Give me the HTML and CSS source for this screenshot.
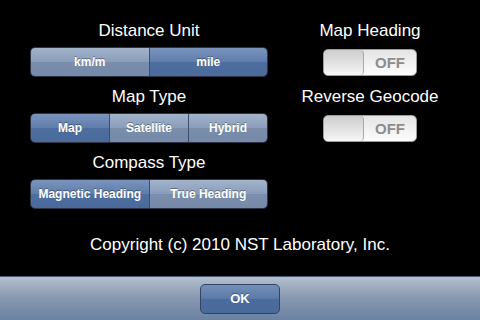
FILE: index.html
```html
<!DOCTYPE html>
<html>
<head>
  <meta charset="utf-8">
  <link rel="stylesheet" href="styles.css">
</head>
<body>
  <div class="main">
    <div class="columns">
      <div class="left">
        <div class="group">
          <div class="title">Distance Unit</div>
          <div class="segmented">
            <div class="seg">km/m</div>
            <div class="seg selected">mile</div>
          </div>
        </div>
        <div class="group">
          <div class="title">Map Type</div>
          <div class="segmented">
            <div class="seg selected">Map</div>
            <div class="seg">Satellite</div>
            <div class="seg">Hybrid</div>
          </div>
        </div>
        <div class="group">
          <div class="title">Compass Type</div>
          <div class="segmented">
            <div class="seg selected">Magnetic Heading</div>
            <div class="seg">True Heading</div>
          </div>
        </div>
      </div>

      <div class="right">
        <div class="switch-group">
          <div class="title">Map Heading</div>
          <div class="switch">
            <span class="thumb"></span>
            <span class="state">OFF</span>
          </div>
        </div>
        <div class="switch-group">
          <div class="title">Reverse Geocode</div>
          <div class="switch">
            <span class="thumb"></span>
            <span class="state">OFF</span>
          </div>
        </div>
      </div>
    </div>

    <div class="copyright">Copyright (c) 2010 NST Laboratory, Inc.</div>
  </div>

  <div class="toolbar">
    <button class="ok-btn">OK</button>
  </div>
</body>
</html>
```

FILE: styles.css
```css
body {
  width: 480px;
  height: 320px;
  margin: 0;
  padding: 0;
  background: #000;
  color: #fff;
  font-family: "Liberation Sans", Arial, sans-serif;
  display: flex;
  flex-direction: column;
  overflow: hidden;
}

.main {
  flex: 1;
  padding-top: 21px;
}

.columns {
  display: flex;
}

.left {
  width: 238px;
  margin-left: 30px;
}

.right {
  width: 140px;
  margin-left: 32px;
  display: flex;
  flex-direction: column;
  align-items: center;
}

.title {
  font-size: 17px;
  line-height: 20px;
  text-align: center;
  white-space: nowrap;
}

.group {
  margin-bottom: 10px;
}

.group:last-child {
  margin-bottom: 0;
}

.group .title {
  margin-bottom: 6px;
}

.segmented {
  display: flex;
  height: 28px;
  border: 1px solid #2b3344;
  border-radius: 5px;
  overflow: hidden;
}

.seg {
  flex: 1;
  display: flex;
  align-items: center;
  justify-content: center;
  font-size: 12px;
  font-weight: bold;
  color: #fff;
  text-shadow: 0 -1px 0 rgba(0, 0, 0, 0.35);
  background: linear-gradient(#a2b3cb, #8a9db9 50%, #7a8eac 50%, #7589a8);
  border-left: 1px solid #3c4d6d;
}

.seg:first-child {
  border-left: none;
}

.seg.selected {
  background: linear-gradient(#7a94bd, #5f7cab 50%, #4e6e9f 50%, #4a6a9b);
}

.switch-group {
  display: flex;
  flex-direction: column;
  align-items: center;
  margin-bottom: 11px;
}

.switch-group .title {
  margin-bottom: 8px;
}

.switch {
  display: flex;
  width: 92px;
  height: 25px;
  border: 1px solid #9c9c9c;
  border-radius: 5px;
  overflow: hidden;
  background: linear-gradient(#e4e4e4, #fdfdfd);
}

.thumb {
  width: 39px;
  border-right: 1px solid #a8a8a8;
  border-radius: 4px;
  background: linear-gradient(#cdcdcd, #f6f6f6);
}

.state {
  flex: 1;
  display: flex;
  align-items: center;
  justify-content: center;
  font-size: 15px;
  font-weight: bold;
  color: #8c8c8c;
}

.copyright {
  margin-top: 26px;
  font-size: 17px;
  line-height: 20px;
  text-align: center;
}

.toolbar {
  height: 43px;
  border-top: 1px solid #4a5870;
  background: linear-gradient(#b3bfcf, #8797b0 50%, #6b82a3);
  display: flex;
  justify-content: center;
  align-items: center;
}

.ok-btn {
  width: 80px;
  height: 30px;
  border: 1px solid #344460;
  border-radius: 5px;
  background: linear-gradient(#7390ba, #5b79a8 50%, #4b6b9c 50%, #4a6a9a);
  color: #fff;
  font-family: "Liberation Sans", Arial, sans-serif;
  font-size: 13px;
  font-weight: bold;
  text-shadow: 0 -1px 0 rgba(0, 0, 0, 0.35);
  padding: 0;
}
```
